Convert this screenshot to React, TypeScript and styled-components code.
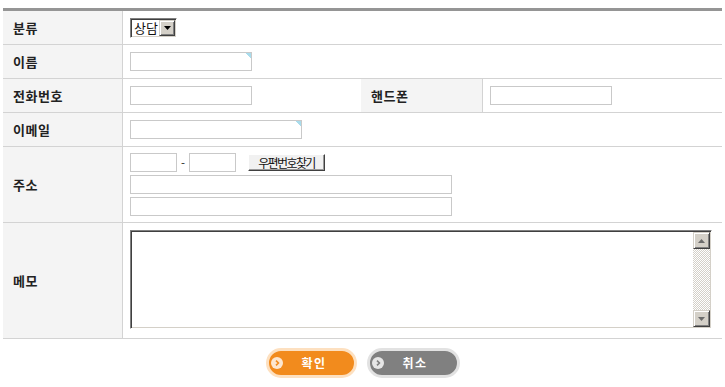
import React from "react";
import styled, { createGlobalStyle } from "styled-components";

const Global = createGlobalStyle`
  * { box-sizing: border-box; }
  body {
    margin: 0;
    background: #ffffff;
    font-family: "Noto Sans CJK KR", "Noto Sans", sans-serif;
    color: #222;
  }
`;

const Page = styled.div`
  padding: 8px 3px 0;
  width: 725px;
`;

const Form = styled.div`
  width: 719px;
  border-top: 3px solid #959595;
`;

const Row = styled.div<{ $h: number; $cols?: string }>`
  display: grid;
  grid-template-columns: ${(p) => p.$cols ?? "120px 1fr"};
  height: ${(p) => p.$h}px;
  border-bottom: 1px solid #d3d3d3;
`;

const Label = styled.div`
  display: flex;
  align-items: center;
  padding-left: 10px;
  background: #f4f4f4;
  border-right: 1px solid #d3d3d3;
  font-size: 13px;
  font-weight: 700;
  letter-spacing: 0.5px;
  color: #222;
  line-height: 1;
`;

const Cell = styled.div`
  display: flex;
  align-items: center;
  padding-left: 7px;
`;

const StackCell = styled.div`
  display: flex;
  flex-direction: column;
  justify-content: center;
  gap: 3px;
  padding-left: 7px;
`;

const MemoCell = styled.div`
  display: flex;
  align-items: flex-start;
  padding: 7px 0 0 7px;
`;

const Line = styled.div`
  display: flex;
  align-items: center;
`;

const Input = styled.input<{ $w: number; $mark?: boolean }>`
  width: ${(p) => p.$w}px;
  height: 19px;
  border: 1px solid #c9c9c9;
  padding: 0 3px;
  font-size: 12px;
  font-family: inherit;
  outline: none;
  background: ${(p) =>
    p.$mark
      ? "linear-gradient(225deg, #a9dcec 0 4px, #ffffff 4px) no-repeat"
      : "#ffffff"};
`;

const Dash = styled.span`
  margin: 0 4px;
  font-size: 11px;
  color: #333;
  font-family: "DejaVu Sans", sans-serif;
`;

const LegacyButton = styled.button`
  margin-left: 12px;
  width: 77px;
  height: 17px;
  padding: 0;
  background: #f1f1f1;
  border: 1px solid;
  border-color: #ffffff #404040 #404040 #ffffff;
  box-shadow: inset -1px -1px 0 #9a9a9a;
  font-family: "Noto Sans CJK KR", sans-serif;
  font-size: 12px;
  letter-spacing: -1.6px;
  line-height: 15px;
  color: #111;
`;

const Select = styled.div`
  display: inline-flex;
  align-items: center;
  width: 47px;
  height: 20px;
  border: 1px solid;
  border-color: #808080 #ffffff #ffffff #808080;
  box-shadow: inset 1px 1px 0 #404040, inset -1px -1px 0 #d4d0c8;
  background: #ffffff;
  padding: 1px 1px 1px 3px;
`;

const SelectText = styled.span`
  flex: 1;
  font-size: 13px;
  line-height: 1;
  color: #111;
`;

const ArrowBtn = styled.span`
  display: flex;
  align-items: center;
  justify-content: center;
  width: 16px;
  height: 16px;
  background: #d4d0c8;
  border: 1px solid;
  border-color: #d4d0c8 #404040 #404040 #d4d0c8;
  box-shadow: inset 1px 1px 0 #ffffff, inset -1px -1px 0 #808080;
`;

const MemoBox = styled.div`
  display: flex;
  width: 582px;
  height: 99px;
  border: 1px solid;
  border-color: #808080 #ffffff #ffffff #808080;
  box-shadow: inset 1px 1px 0 #404040, inset -1px -1px 0 #d4d0c8;
  padding: 1px;
  background: #ffffff;
`;

const MemoArea = styled.textarea`
  flex: 1;
  border: none;
  outline: none;
  resize: none;
  overflow: hidden;
  font-family: inherit;
  font-size: 12px;
  background: transparent;
`;

const ScrollBar = styled.div`
  display: flex;
  flex-direction: column;
  width: 17px;
`;

const ScrollBtn = styled.span`
  display: flex;
  align-items: center;
  justify-content: center;
  width: 17px;
  height: 17px;
  background: #d4d0c8;
  border: 1px solid;
  border-color: #d4d0c8 #404040 #404040 #d4d0c8;
  box-shadow: inset 1px 1px 0 #ffffff, inset -1px -1px 0 #808080;
`;

const ScrollTrack = styled.div`
  flex: 1;
  background: repeating-conic-gradient(#d4d0c8 0 25%, #ffffff 0 50%) 0 0 / 2px 2px;
`;

const Actions = styled.div`
  display: flex;
  justify-content: center;
  gap: 10px;
  margin-top: 9px;
  margin-left: -3px;
  width: 725px;
`;

const Pill = styled.button<{ $fill: string; $glow: string; $w: number }>`
  display: flex;
  align-items: center;
  width: ${(p) => p.$w}px;
  height: 30px;
  padding: 0 0 0 2px;
  border: 3px solid ${(p) => p.$glow};
  border-radius: 15px;
  background: ${(p) => p.$fill};
  color: #ffffff;
  font-family: "Noto Sans CJK KR", sans-serif;
  font-size: 12px;
  font-weight: 700;
  letter-spacing: 1.5px;
  cursor: pointer;
`;

const PillText = styled.span`
  margin-left: 19px;
  line-height: 1;
`;

const Dot = ({ bg, fg }: { bg: string; fg: string }) => (
  <svg width="12" height="12" viewBox="0 0 12 12">
    <circle cx="6" cy="6" r="6" fill={bg} />
    <path d="M5 3.6 L7.4 6 L5 8.4" stroke={fg} strokeWidth="1.6" fill="none" />
  </svg>
);

const Tri = ({ up, color }: { up?: boolean; color: string }) => (
  <svg width="7" height="4" viewBox="0 0 7 4">
    <path d={up ? "M0 4 L3.5 0 L7 4 Z" : "M0 0 L7 0 L3.5 4 Z"} fill={color} />
  </svg>
);

export default function App() {
  return (
    <Page>
      <Global />
      <Form>
        <Row $h={34}>
          <Label>분류</Label>
          <Cell>
            <Select>
              <SelectText>상담</SelectText>
              <ArrowBtn>
                <Tri color="#000" />
              </ArrowBtn>
            </Select>
          </Cell>
        </Row>
        <Row $h={34}>
          <Label>이름</Label>
          <Cell>
            <Input $w={122} $mark />
          </Cell>
        </Row>
        <Row $h={34} $cols="120px 238px 122px 1fr">
          <Label>전화번호</Label>
          <Cell>
            <Input $w={122} />
          </Cell>
          <Label>핸드폰</Label>
          <Cell>
            <Input $w={122} />
          </Cell>
        </Row>
        <Row $h={34}>
          <Label>이메일</Label>
          <Cell>
            <Input $w={172} $mark />
          </Cell>
        </Row>
        <Row $h={76}>
          <Label>주소</Label>
          <StackCell>
            <Line>
              <Input $w={47} />
              <Dash>-</Dash>
              <Input $w={47} />
              <LegacyButton type="button">우편번호찾기</LegacyButton>
            </Line>
            <Input $w={322} />
            <Input $w={322} />
          </StackCell>
        </Row>
        <Row $h={116}>
          <Label>메모</Label>
          <MemoCell>
            <MemoBox>
              <MemoArea />
              <ScrollBar>
                <ScrollBtn>
                  <Tri up color="#6b6b6b" />
                </ScrollBtn>
                <ScrollTrack />
                <ScrollBtn>
                  <Tri color="#6b6b6b" />
                </ScrollBtn>
              </ScrollBar>
            </MemoBox>
          </MemoCell>
        </Row>
      </Form>
      <Actions>
        <Pill type="button" $w={91} $fill="#f28b1d" $glow="#fde0c0">
          <Dot bg="#fde6cf" fg="#f28b1d" />
          <PillText>확인</PillText>
        </Pill>
        <Pill type="button" $w={93} $fill="#808080" $glow="#e2e2e2">
          <Dot bg="#e6e6e6" fg="#808080" />
          <PillText>취소</PillText>
        </Pill>
      </Actions>
    </Page>
  );
}
